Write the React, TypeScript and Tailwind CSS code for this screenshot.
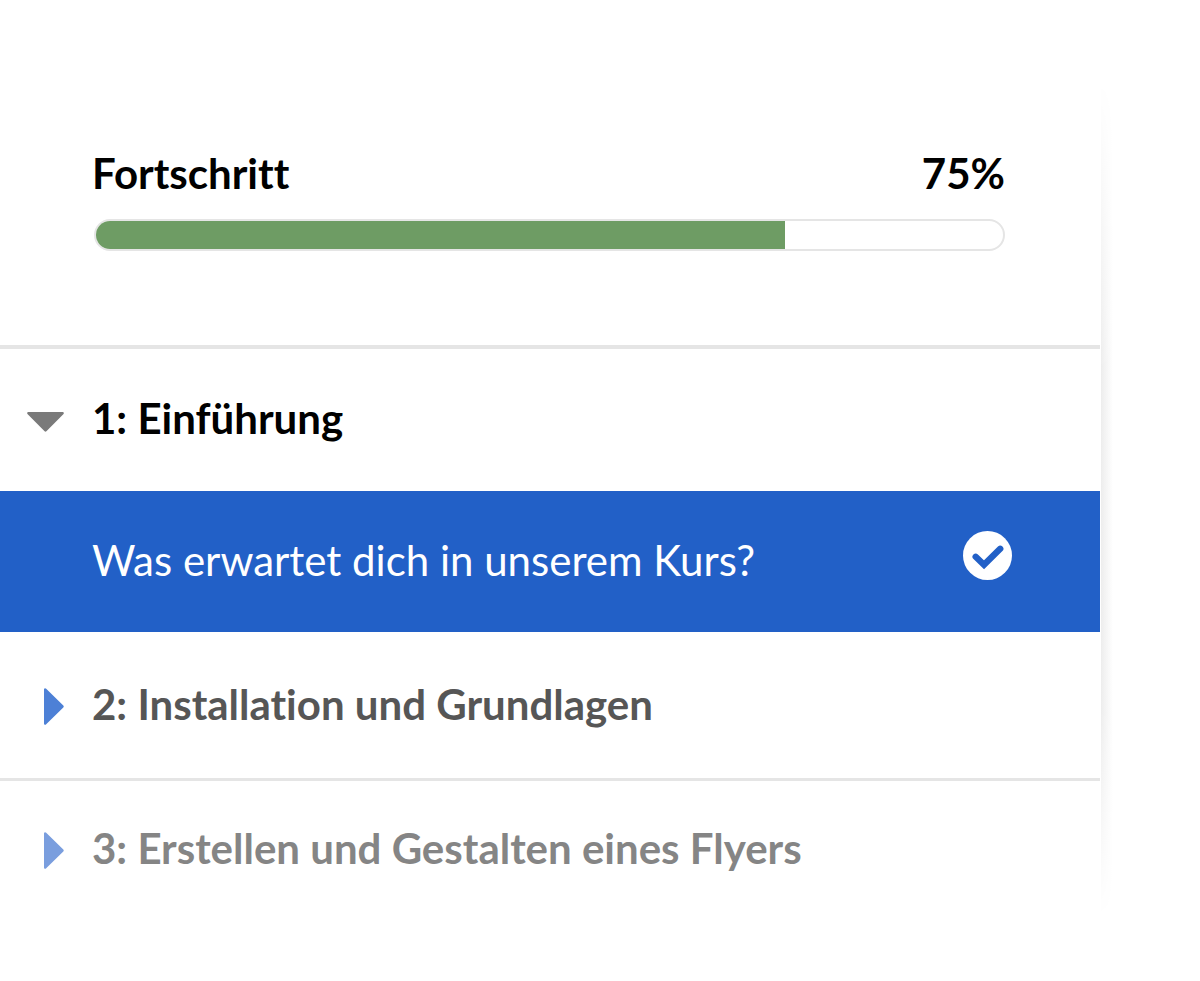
import { useState } from 'react';
import clsx from 'clsx';

interface Chapter {
  id: number;
  title: string;
  lessons: string[];
  rowClass: string;
  textClass: string;
  arrowClass: string;
}

const chapters: Chapter[] = [
  {
    id: 1,
    title: '1: Einführung',
    lessons: ['Was erwartet dich in unserem Kurs?'],
    rowClass: 'pt-11 pb-12',
    textClass: 'text-black',
    arrowClass: 'text-[#7a7a7a]',
  },
  {
    id: 2,
    title: '2: Installation und Grundlagen',
    lessons: [],
    rowClass: 'pt-[47px] pb-[49px] border-b-3 border-[#e5e5e5]',
    textClass: 'text-[#565656]',
    arrowClass: 'text-[#4d80d6]',
  },
  {
    id: 3,
    title: '3: Erstellen und Gestalten eines Flyers',
    lessons: [],
    rowClass: 'pt-[42px] pb-12',
    textClass: 'text-[#858585]',
    arrowClass: 'text-[#7a9ede]',
  },
];

function ArrowDown({ className }: { className: string }) {
  return (
    <svg className={clsx('w-[37px] h-5 mt-1', className)} viewBox="0 0 37 20" fill="currentColor" aria-hidden="true">
      <path d="M1.6 0H35.4C36.8 0 37.3 1.3 36.3 2.2L19.4 19.3Q18.5 20.2 17.6 19.3L.7 2.2C-.3 1.3.2 0 1.6 0Z" />
    </svg>
  );
}

function ArrowRight({ className }: { className: string }) {
  return (
    <svg className={clsx('w-5 h-[37px]', className)} viewBox="0 0 20 37" fill="currentColor" aria-hidden="true">
      <path d="M0 1.6V35.4C0 36.8 1.3 37.3 2.2 36.3L19.3 19.4Q20.2 18.5 19.3 17.6L2.2.7C1.3-.3 0 .2 0 1.6Z" />
    </svg>
  );
}

function CheckBadge() {
  return (
    <svg className="w-[49px] h-[49px] mb-2 shrink-0" viewBox="0 0 49 49" fill="none" role="img" aria-label="Erledigt">
      <circle cx="24.5" cy="24.5" r="24.5" fill="white" />
      <path d="M12.7 25.8L21 33.8L37.2 17.8" stroke="#2260c7" strokeWidth="6.4" strokeLinecap="round" />
    </svg>
  );
}

export default function App() {
  const [openId, setOpenId] = useState<number | null>(1);

  return (
    <div className="flex min-h-screen bg-white font-['Lato',sans-serif] text-[42px] leading-[50px] [font-variant-ligatures:none]">
      <main className="flex-1 min-w-0">
        <section className="pt-[148px] pb-[94px] pl-[92px] pr-[95px] border-b-4 border-[#e5e5e5]">
          <div className="flex justify-between font-bold text-black">
            <h2 id="progress-label">Fortschritt</h2>
            <span>75%</span>
          </div>
          <div
            role="progressbar"
            aria-labelledby="progress-label"
            aria-valuenow={75}
            aria-valuemin={0}
            aria-valuemax={100}
            className="mt-[21px] ml-0.5 h-8 rounded-full border-2 border-[#e5e5e5] overflow-hidden"
          >
            <div className="h-full w-[76%] bg-[#6e9c64]" />
          </div>
        </section>

        {chapters.map((chapter) => {
          const isOpen = openId === chapter.id;
          return (
            <section key={chapter.id}>
              <button
                onClick={() => setOpenId(isOpen ? null : chapter.id)}
                aria-expanded={isOpen}
                className={clsx('flex w-full items-center text-left font-bold', chapter.rowClass, chapter.textClass)}
              >
                <span className="flex w-[92px] shrink-0 justify-end pr-7 pt-1">
                  {isOpen ? <ArrowDown className={chapter.arrowClass} /> : <ArrowRight className={chapter.arrowClass} />}
                </span>
                {chapter.title}
              </button>
              {isOpen &&
                chapter.lessons.map((lesson) => (
                  <a
                    key={lesson}
                    href="#kurs"
                    className="flex items-center justify-between bg-[#2260c7] pt-10 pb-11 pl-[92px] pr-[88px] text-white"
                  >
                    {lesson}
                    <CheckBadge />
                  </a>
                ))}
            </section>
          );
        })}
      </main>

      {/* soft edge of the sidebar, fading out at both ends */}
      <div className="w-[100px] shrink-0 pl-px pt-20 pb-16 flex">
        <div className="w-3 bg-linear-to-r from-[#ededed] to-white mask-[linear-gradient(to_bottom,transparent,black_35%,black_75%,transparent)]" />
      </div>
    </div>
  );
}
